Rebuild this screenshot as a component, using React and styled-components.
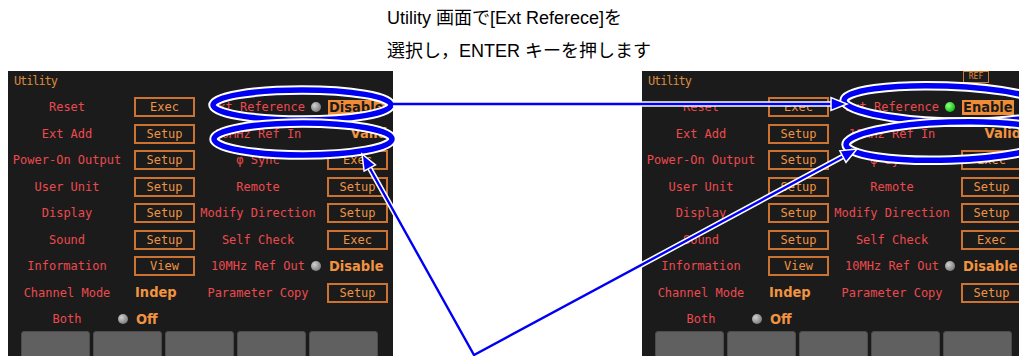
import React from "react";
import styled, { createGlobalStyle } from "styled-components";

const GlobalStyle = createGlobalStyle`
  html, body {
    margin: 0;
    padding: 0;
    background: #fff;
  }
  body {
    overflow: hidden;
  }
`;

const BLUE = "#0000f2";

const rows = [
  { l: "Reset", v: { btn: "Exec" }, r: "Ext Reference", rv: { ref: true } },
  { l: "Ext Add", v: { btn: "Setup" }, r: "10MHz Ref In", rv: { bold: "Valid", end: true } },
  { l: "Power-On Output", v: { btn: "Setup" }, r: "φ Sync", rv: { btn: "Exec" } },
  { l: "User Unit", v: { btn: "Setup" }, r: "Remote", rv: { btn: "Setup" } },
  { l: "Display", v: { btn: "Setup" }, r: "Modify Direction", rv: { btn: "Setup" } },
  { l: "Sound", v: { btn: "Setup" }, r: "Self Check", rv: { btn: "Exec" } },
  { l: "Information", v: { btn: "View" }, r: "10MHz Ref Out", rv: { dot: "gray", bold: "Disable" } },
  { l: "Channel Mode", v: { bold: "Indep" }, r: "Parameter Copy", rv: { btn: "Setup" } },
  { l: "Both", v: { dot: "gray", bold: "Off" }, r: "", rv: null },
];

function head(tx, ty, fx, fy, len = 16, hw = 6.5) {
  const dx = tx - fx;
  const dy = ty - fy;
  const d = Math.hypot(dx, dy);
  const ux = dx / d;
  const uy = dy / d;
  const bx = tx - ux * len;
  const by = ty - uy * len;
  return `${tx},${ty} ${bx - uy * hw},${by + ux * hw} ${bx + uy * hw},${by - ux * hw}`;
}

function Cell({ v, enabled }) {
  if (!v) return <Value />;
  if (v.ref) {
    return (
      <Value>
        <Dot $color={enabled ? "green" : "gray"} />
        <Strong $on>{enabled ? "Enable" : "Disable"}</Strong>
      </Value>
    );
  }
  if (v.btn) {
    return (
      <Value>
        <Button>{v.btn}</Button>
      </Value>
    );
  }
  return (
    <Value $end={v.end}>
      {v.dot && <Dot $color={v.dot} />}
      <Strong>{v.bold}</Strong>
    </Value>
  );
}

function Screen({ enabled }) {
  return (
    <Panel>
      <TitleBar>
        <Title>Utility</Title>
        {enabled && <Badge>REF</Badge>}
      </TitleBar>
      <Grid>
        {rows.map((row) => (
          <React.Fragment key={row.l}>
            <Label $trail={8}>{row.l}</Label>
            <Cell v={row.v} enabled={enabled} />
            <Label $trail={11}>{row.r}</Label>
            <Cell v={row.rv} enabled={enabled} />
          </React.Fragment>
        ))}
      </Grid>
      <Keys>
        {[0, 1, 2, 3, 4].map((k) => (
          <Key key={k} />
        ))}
      </Keys>
    </Panel>
  );
}

function Annotations() {
  const ellipses = [
    { cx: 302, cy: 105, rx: 89, ry: 15, rot: 0 },
    { cx: 303, cy: 139, rx: 89, ry: 16, rot: 0 },
    { cx: 946, cy: 104, rx: 102, ry: 18, rot: 2 },
    { cx: 950, cy: 141, rx: 104, ry: 19, rot: -2 },
  ];
  const lines = "M393,104 L834,104 M364,158 L474,355 L853,151";
  return (
    <Overlay width="1019" height="356" viewBox="0 0 1019 356">
      {ellipses.map((e, i) => (
        <g key={i} transform={`rotate(${e.rot} ${e.cx} ${e.cy})`}>
          <ellipse cx={e.cx} cy={e.cy} rx={e.rx} ry={e.ry} fill="none" stroke="#fff" strokeWidth="9.5" />
          <ellipse cx={e.cx} cy={e.cy} rx={e.rx} ry={e.ry} fill="none" stroke={BLUE} strokeWidth="5.5" />
        </g>
      ))}
      <path d={lines} fill="none" stroke="#fff" strokeWidth="5.5" strokeLinejoin="miter" />
      <path d={lines} fill="none" stroke={BLUE} strokeWidth="2.4" strokeLinejoin="miter" />
      {[head(847, 104, 393, 104), head(362, 154, 474, 355), head(857, 149, 474, 355)].map((p, i) => (
        <polygon key={i} points={p} fill={BLUE} stroke="#fff" strokeWidth="1.5" strokeLinejoin="miter" />
      ))}
    </Overlay>
  );
}

export default function App() {
  return (
    <>
      <GlobalStyle />
      <Page>
        <Caption>
          <div>Utility 画面で[Ext Referece]を</div>
          <div>選択し，ENTER キーを押します</div>
        </Caption>
        <Screens>
          <Screen />
          <Screen enabled />
        </Screens>
        <Annotations />
      </Page>
    </>
  );
}

const Page = styled.div`
  position: relative;
  width: 1019px;
  height: 356px;
  overflow: hidden;
  background: #fff;
`;

const Caption = styled.div`
  padding: 2px 0 3px 387px;
  font-family: "Liberation Sans", "Noto Sans CJK JP", sans-serif;
  font-size: 18px;
  line-height: 33px;
  color: #000;
  white-space: nowrap;
`;

const Screens = styled.div`
  display: flex;
  gap: 249px;
  padding-left: 8px;
`;

const Panel = styled.div`
  flex: none;
  width: 385px;
  height: 300px;
  background: #1b1b1b;
  display: flex;
  flex-direction: column;
`;

const TitleBar = styled.div`
  height: 23px;
  display: flex;
  justify-content: space-between;
  align-items: flex-start;
  padding: 0 38px 0 6px;
`;

const Title = styled.span`
  font-family: "DejaVu Sans Mono", monospace;
  font-size: 12px;
  letter-spacing: -1.1px;
  line-height: 20px;
  color: #d88a3e;
`;

const Badge = styled.span`
  box-sizing: border-box;
  width: 26px;
  height: 12px;
  border: 1px solid #d07a34;
  font-family: "DejaVu Sans Mono", monospace;
  font-size: 8px;
  line-height: 10px;
  text-align: center;
  color: #e08a3e;
`;

const Grid = styled.div`
  display: grid;
  grid-template-columns: 126px 66px 127px 61px;
  grid-auto-rows: 26.5px;
  align-items: center;
`;

const Label = styled.div`
  padding-right: ${(p) => p.$trail}px;
  text-align: center;
  font-family: "DejaVu Sans Mono", monospace;
  font-size: 12px;
  color: #ec4a4e;
  white-space: nowrap;
`;

const Value = styled.div`
  height: 100%;
  display: flex;
  align-items: center;
  justify-content: ${(p) => (p.$end ? "flex-end" : "flex-start")};
`;

const Button = styled.div`
  box-sizing: border-box;
  width: 61px;
  height: 20px;
  border: 2px solid #cd7332;
  display: flex;
  align-items: center;
  justify-content: center;
  font-family: "DejaVu Sans Mono", monospace;
  font-size: 12px;
  color: #ee9443;
`;

const Strong = styled.span`
  padding: 0 1px;
  font-family: "DejaVu Sans Condensed", "DejaVu Sans", sans-serif;
  font-stretch: condensed;
  font-weight: bold;
  font-size: 14.5px;
  line-height: 15px;
  color: ${(p) => (p.$on ? "#1b1b1b" : "#f19340")};
  background: ${(p) => (p.$on ? "#f08b36" : "transparent")};
`;

const Dot = styled.span`
  flex: none;
  width: 10px;
  height: 10px;
  margin: 0 7px 0 -16px;
  border-radius: 50%;
  background: ${(p) =>
    p.$color === "green"
      ? "radial-gradient(circle at 35% 35%, #9dff8a, #22d022 60%, #129a12)"
      : "radial-gradient(circle at 35% 35%, #d0d0d0, #8c8c8c 60%, #6a6a6a)"};
`;

const Keys = styled.div`
  display: flex;
  gap: 3px;
  padding: 0 13px;
  margin-top: -1.5px;
`;

const Key = styled.div`
  box-sizing: border-box;
  width: 69px;
  height: 30px;
  background: #606060;
  border: 1px solid #4c4c4c;
  border-radius: 3px 3px 0 0;
`;

const Overlay = styled.svg`
  position: absolute;
  top: 0;
  left: 0;
  pointer-events: none;
`;
